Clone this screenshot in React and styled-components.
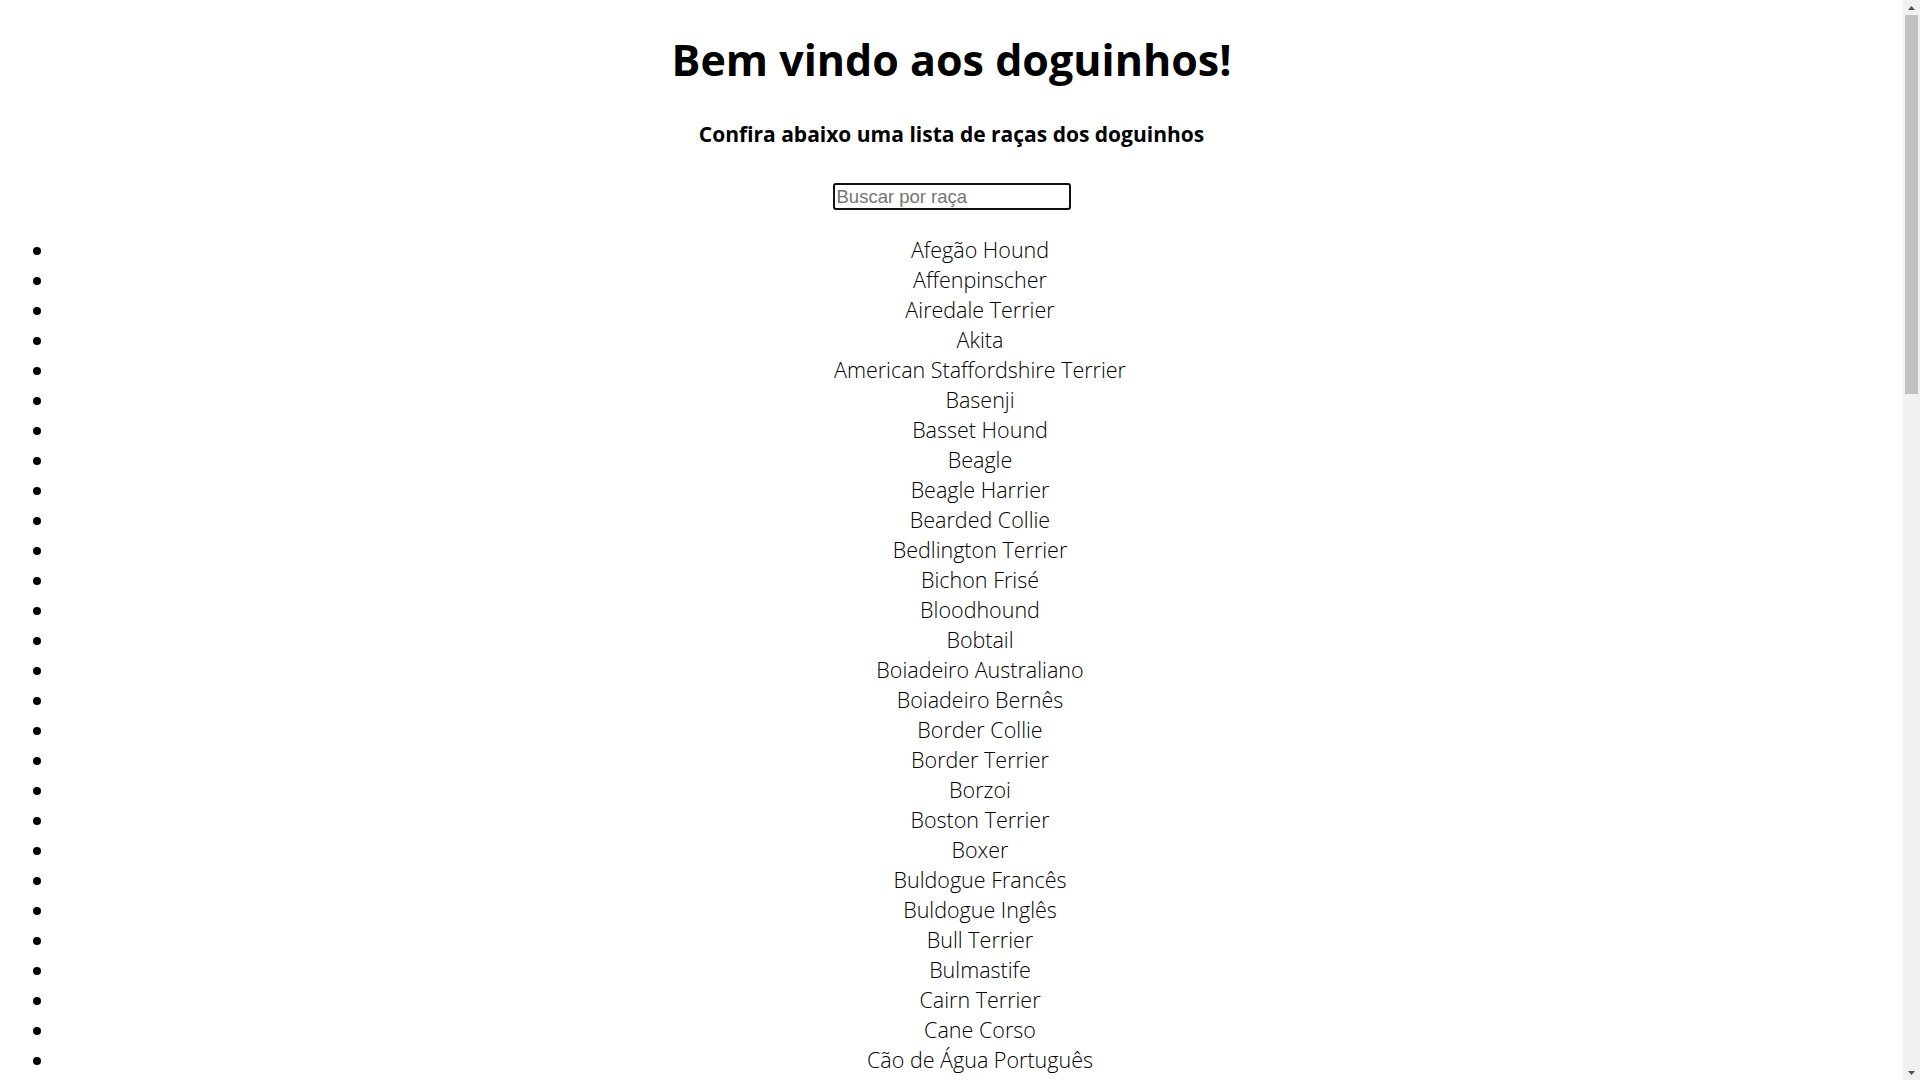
import styled, { createGlobalStyle } from 'styled-components'
import { useState } from 'react'

const GlobalStyle = createGlobalStyle`
  html, body {
    margin: 0;
    height: 100%;
    overflow: hidden;
    background-color: #ffffff;
    color: #000000;
    font-family: "Open Sans", "Noto Sans", sans-serif;
  }
`

const Window = styled.div`
  display: flex;
  height: 100vh;
`

const Page = styled.main`
  flex: 1;
  min-width: 0;
  padding: 8px;
  overflow: hidden;
`

const ScrollBar = styled.div`
  display: flex;
  flex-direction: column;
  align-items: center;
  width: 17px;
  background-color: #f1f1f1;
`

const ScrollArrow = styled.div`
  display: flex;
  align-items: center;
  justify-content: center;
  width: 17px;
  height: 15px;
  margin-top: ${(props) => (props.down ? 'auto' : '0')};
`

const ScrollThumb = styled.div`
  width: 13px;
  height: 379px;
  background-color: #c1c1c1;
`

const Header = styled.header`
  display: flex;
  flex-direction: column;
  align-items: center;
  padding-top: 27px;
`

const Title = styled.h1`
  margin: 0;
  font-size: 43px;
  line-height: 50px;
  font-weight: 700;
`

const Subtitle = styled.h3`
  margin: 35px 0 0;
  font-size: 21px;
  line-height: 28px;
  font-weight: 700;
`

const SearchInput = styled.input`
  box-sizing: border-box;
  width: 238px;
  height: 27px;
  margin-top: 35px;
  padding: 0 2px;
  border: 2px solid #101010;
  border-radius: 3px;
  font-family: "Liberation Sans", Arial, sans-serif;
  font-size: 18.5px;
  outline: none;
  &::placeholder {
    color: #757575;
  }
`

const BreedList = styled.ul`
  margin: 25px -10px 0 0;
  padding: 0 0 0 47px;
  list-style: disc;
`

const BreedItem = styled.li`
  text-align: center;
  font-size: 21.5px;
  line-height: 30px;
  font-weight: 300;
  color: #000000;
`

const breeds = [
  'Afegão Hound',
  'Affenpinscher',
  'Airedale Terrier',
  'Akita',
  'American Staffordshire Terrier',
  'Basenji',
  'Basset Hound',
  'Beagle',
  'Beagle Harrier',
  'Bearded Collie',
  'Bedlington Terrier',
  'Bichon Frisé',
  'Bloodhound',
  'Bobtail',
  'Boiadeiro Australiano',
  'Boiadeiro Bernês',
  'Border Collie',
  'Border Terrier',
  'Borzoi',
  'Boston Terrier',
  'Boxer',
  'Buldogue Francês',
  'Buldogue Inglês',
  'Bull Terrier',
  'Bulmastife',
  'Cairn Terrier',
  'Cane Corso',
  'Cão de Água Português',
  'Cão de Crista Chinês',
  'Cavalier King Charles Spaniel',
  'Chesapeake Bay Retriever',
  'Chihuahua',
  'Chow Chow',
  'Cocker Spaniel Americano',
  'Cocker Spaniel Inglês',
  'Collie',
  'Coton de Tuléar',
  'Dachshund',
  'Dálmata',
  'Dandie Dinmont Terrier',
  'Dobermann',
  'Dogo Argentino',
  'Dogue Alemão',
  'Fila Brasileiro',
  'Fox Terrier',
  'Galgo Inglês',
  'Golden Retriever',
  'Husky Siberiano',
  'Jack Russell Terrier',
  'Kerry Blue Terrier',
  'Labrador Retriever',
  'Lhasa Apso',
  'Lulu da Pomerânia',
  'Malamute do Alasca',
  'Maltês',
  'Mastim Napolitano',
  'Mastiff',
  'Pastor Alemão',
  'Pastor Belga',
  'Pastor de Shetland',
  'Pequinês',
  'Pinscher Miniatura',
  'Pointer',
  'Poodle',
  'Pug',
  'Rottweiler',
  'Samoieda',
  'São Bernardo',
  'Schnauzer',
  'Setter Irlandês',
  'Shar-pei',
  'Shiba Inu',
  'Shih Tzu',
  'Staffordshire Bull Terrier',
  'Terra Nova',
  'Weimaraner',
  'Welsh Corgi',
  'West Highland White Terrier',
  'Whippet',
  'Yorkshire Terrier',
]

function Arrow({ down }) {
  return (
    <ScrollArrow down={down}>
      <svg width="7" height="4" viewBox="0 0 7 4">
        <path
          d={down ? 'M0 0 L7 0 L3.5 4 Z' : 'M0 4 L7 4 L3.5 0 Z'}
          fill="#505050"
        />
      </svg>
    </ScrollArrow>
  )
}

export default function App() {
  const [search, setSearch] = useState('')

  const filtered = breeds.filter((breed) =>
    breed.toLowerCase().includes(search.toLowerCase())
  )

  return (
    <Window>
      <GlobalStyle />
      <Page>
        <Header>
          <Title>Bem vindo aos doguinhos!</Title>
          <Subtitle>Confira abaixo uma lista de raças dos doguinhos</Subtitle>
          <SearchInput
            type="text"
            placeholder="Buscar por raça"
            value={search}
            onChange={(e) => setSearch(e.target.value)}
          />
        </Header>
        <BreedList>
          {filtered.map((breed) => (
            <BreedItem key={breed}>{breed}</BreedItem>
          ))}
        </BreedList>
      </Page>
      <ScrollBar>
        <Arrow />
        <ScrollThumb />
        <Arrow down />
      </ScrollBar>
    </Window>
  )
}
